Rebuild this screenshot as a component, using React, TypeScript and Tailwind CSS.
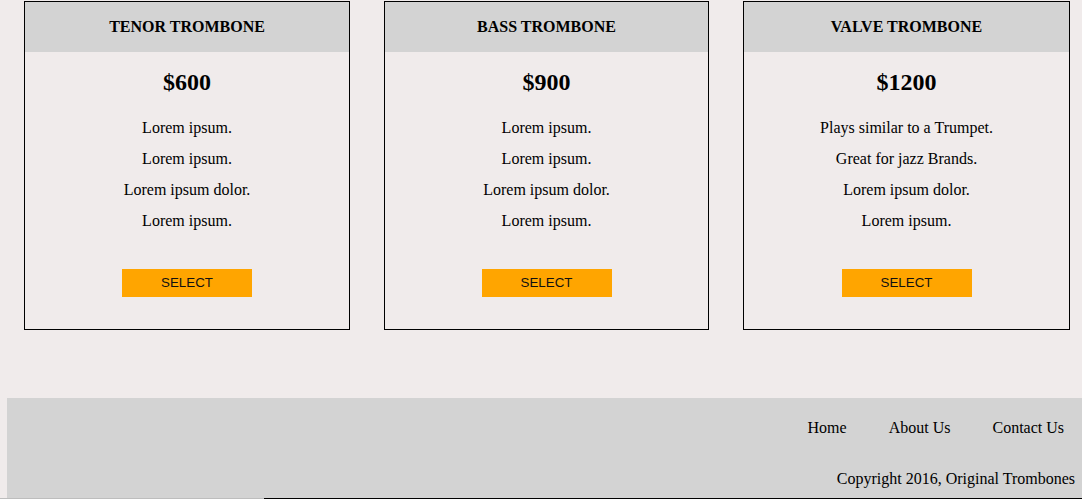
import React from "react";

const cards = [
  { title: "TENOR TROMBONE", price: "$600", lines: ["Lorem ipsum.", "Lorem ipsum.", "Lorem ipsum dolor.", "Lorem ipsum."], w: "w-[326px]" },
  { title: "BASS TROMBONE", price: "$900", lines: ["Lorem ipsum.", "Lorem ipsum.", "Lorem ipsum dolor.", "Lorem ipsum."], w: "w-[325px]" },
  { title: "VALVE TROMBONE", price: "$1200", lines: ["Plays similar to a Trumpet.", "Great for jazz Brands.", "Lorem ipsum dolor.", "Lorem ipsum."], w: "w-[327px]" },
];

export default function App() {
  return (
    <div className="w-[1082px] h-[499px] overflow-hidden bg-[#f0ebeb] text-black font-['Liberation_Serif',serif]">
      <div className="flex gap-[34px] pl-[24px] pt-[1px]">
        {cards.map((c) => (
          <div key={c.title} className={`${c.w} border border-black flex flex-col items-center pb-[32px]`}>
            <div className="w-full h-[50px] bg-[#d3d3d3] flex items-center justify-center text-[16px] font-bold">
              {c.title}
            </div>
            <div className="mt-[16px] h-[28px] leading-[28px] text-[24px] font-bold">{c.price}</div>
            <div className="mt-[16px] flex flex-col items-center">
              {c.lines.map((l, i) => (
                <div key={i} className="leading-[31px] text-[16px]">{l}</div>
              ))}
            </div>
            <button className="mt-[33px] w-[130px] h-[28px] bg-[#ffa500] font-['Liberation_Sans',Arial,sans-serif] text-[13.333px] text-[#111]">
              SELECT
            </button>
          </div>
        ))}
      </div>
      <div className="mt-[68px] ml-[7px] h-[100px] bg-[#d3d3d3] flex flex-col">
        <div className="flex justify-end gap-[42px] pr-[18px] pt-[20px] text-[16px] leading-[20px]">
          <span>Home</span>
          <span>About Us</span>
          <span>Contact Us</span>
        </div>
        <div className="flex justify-end pr-[7px] mt-[31px] text-[16px] leading-[20px]">
          Copyright 2016, Original Trombones
        </div>
      </div>
      <div className="flex h-[1px]">
        <div className="w-[264px] bg-[#bdbdbd]" />
        <div className="flex-1 bg-black" />
      </div>
    </div>
  );
}
